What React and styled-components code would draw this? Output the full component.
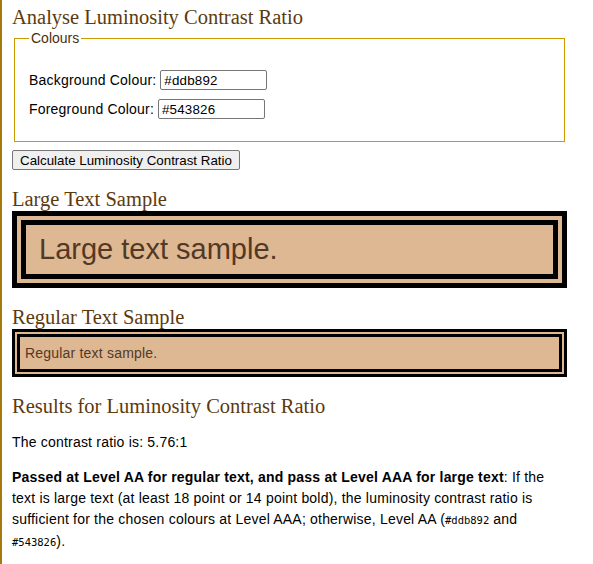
import React from 'react';
import styled, { createGlobalStyle } from 'styled-components';

const GlobalStyle = createGlobalStyle`
    body {
        margin: 0;
        background: #fff;
        color: #000;
        font-family: "Liberation Sans", Arial, sans-serif;
        font-size: 14px;
        letter-spacing: 0.2px;
    }
`;

const Page = styled.main`
    box-sizing: border-box;
    min-height: 100vh;
    border-left: 2px solid #a67a0c;
    padding: 6px 0 1px 10px;
`;

const Content = styled.div`
    width: 555px;
`;

const Heading = styled.h2`
    font-family: "Liberation Serif", "Times New Roman", serif;
    font-weight: normal;
    font-size: 20.5px;
    line-height: 23px;
    letter-spacing: 0;
    color: #5c3a0e;
    margin: ${p => (p.$first ? '0 0 1px' : '18px 0 0')};
`;

const Fieldset = styled.fieldset`
    margin: 0 2px;
    border: 1px solid #cc9a00;
    padding: 24px 14px 22px;
    display: flex;
    flex-direction: column;
    gap: 9px;
`;

const Legend = styled.legend`
    padding: 0 2px;
    font-size: 14px;
    letter-spacing: 0;
    color: #4a2f0c;
`;

const Row = styled.div`
    display: flex;
    align-items: center;
    gap: 4px;
`;

const Label = styled.label`
    font-size: 14px;
`;

const Input = styled.input`
    box-sizing: border-box;
    width: 107px;
    height: 20px;
    margin: 0;
    padding: 1px 3px;
    border: 1px solid #767676;
    border-radius: 2px;
    font-family: "Liberation Sans", Arial, sans-serif;
    font-size: 13.33px;
    letter-spacing: 0.2px;
    color: #000;
`;

const Button = styled.button`
    display: block;
    box-sizing: border-box;
    height: 20px;
    margin: 8px 0 0;
    padding: 0 7px;
    border: 1px solid #767676;
    border-radius: 2px;
    background: #efefef;
    font-family: "Liberation Sans", Arial, sans-serif;
    font-size: 13.33px;
    letter-spacing: 0;
    color: #000;
`;

const Sample = styled.div`
    background: #ddb892;
    color: #543826;
    border: ${p => (p.$large ? '14px' : '8px')} double #000;
    padding: ${p => (p.$large ? '8px 13px' : '8px 5px')};
    font-size: ${p => (p.$large ? '29px' : '14px')};
    letter-spacing: ${p => (p.$large ? '0' : '0.2px')};
    line-height: normal;
`;

const Paragraph = styled.p`
    margin: 14px 0;
    line-height: 21px;
`;

const Code = styled.code`
    font-family: "DejaVu Sans Mono", "Liberation Mono", monospace;
    font-size: 10.5px;
    letter-spacing: 0;
`;

export default function App() {
    const background = '#ddb892';
    const foreground = '#543826';

    return (
        <Page>
            <GlobalStyle />
            <Content>
                <Heading $first>Analyse Luminosity Contrast Ratio</Heading>
                <Fieldset>
                    <Legend>Colours</Legend>
                    <Row>
                        <Label htmlFor="bg">Background Colour:</Label>
                        <Input id="bg" defaultValue={background} />
                    </Row>
                    <Row>
                        <Label htmlFor="fg">Foreground Colour:</Label>
                        <Input id="fg" defaultValue={foreground} />
                    </Row>
                </Fieldset>
                <Button type="button">Calculate Luminosity Contrast Ratio</Button>

                <Heading>Large Text Sample</Heading>
                <Sample $large>Large text sample.</Sample>

                <Heading>Regular Text Sample</Heading>
                <Sample>Regular text sample.</Sample>

                <Heading>Results for Luminosity Contrast Ratio</Heading>
                <Paragraph>The contrast ratio is: 5.76:1</Paragraph>
                <Paragraph>
                    <strong>Passed at Level AA for regular text, and pass at Level AAA for large text</strong>: If the
                    text is large text (at least 18 point or 14 point bold), the luminosity contrast ratio is
                    sufficient for the chosen colours at Level AAA; otherwise, Level AA (<Code>{background}</Code> and{' '}
                    <Code>{foreground}</Code>).
                </Paragraph>
            </Content>
        </Page>
    );
}
